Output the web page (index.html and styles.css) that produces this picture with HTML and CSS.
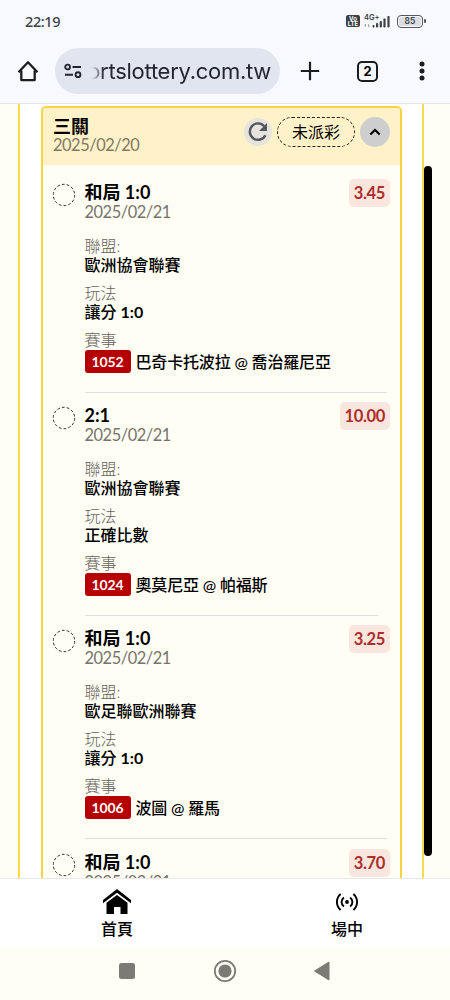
FILE: index.html
```html
<!DOCTYPE html>
<html lang="zh-Hant">
<head>
<meta charset="utf-8">
<meta name="viewport" content="width=device-width">
<title>三關</title>
<link rel="stylesheet" href="styles.css">
</head>
<body>
<header class="status">
  <span class="clock">22:19</span>
  <span class="volte"><span>Vo</span><span>LTE</span></span>
  <span class="signal"><span class="net">4G+</span>
    <svg width="27" height="15" viewBox="0 0 27 15"><g fill="#3e4147"><rect x="8.5" y="11" width="2" height="2.5" rx=".8"/><rect x="12" y="9" width="2.2" height="4.5" rx=".8"/><rect x="15.7" y="7" width="2.2" height="6.5" rx=".8"/><rect x="19.4" y="4.5" width="2.2" height="9" rx=".8"/><rect x="23.4" y="2" width="2.2" height="11.5" rx=".8"/></g><path d="M1.5 13V10L.5 11.500M4.500 10v3l1-1.500" fill="none" stroke="#9a9ca1" stroke-width=".8"/></svg>
  </span>
  <span class="battery"><span class="charge">85</span></span>
</header>
<div class="toolbar">
  <svg class="home" width="22" height="22" viewBox="0 0 22 22"><path d="M1.500 12.300 11 2.300l9.500 10M4.300 10.500v9.600h13.400v-9.600" fill="none" stroke="#1c1d22" stroke-width="2.300" stroke-linejoin="round"/></svg>
  <div class="address">
    <svg width="18" height="16" viewBox="0 0 18 16" fill="none" stroke="#23262e" stroke-width="1.900"><circle cx="3.600" cy="4" r="2.400"/><path d="M8.500 4H17M1 11.700h8"/><circle cx="14" cy="11.700" r="2.400"/></svg>
    <div class="url"><span>ortslottery.com.tw</span></div>
  </div>
  <svg class="plus" width="20" height="20" viewBox="0 0 20 20"><path d="M10 .8v18.400M.8 10h18.400" stroke="#1c1d22" stroke-width="2.200"/></svg>
  <span class="tabs">2</span>
  <svg class="more" width="6" height="20" viewBox="0 0 6 20" fill="#1c1d22"><circle cx="3" cy="3" r="2.500"/><circle cx="3" cy="10" r="2.500"/><circle cx="3" cy="17" r="2.500"/></svg>
</div>
<main class="page">
  <div class="panel">
    <section class="card">
      <div class="card-head">
        <div class="card-title"><h1>三關</h1><p class="date">2025/02/20</p></div>
        <span class="refresh"><svg width="28" height="28" viewBox="0 0 28 28"><path d="M20.300 8.300A8.200 8.200 0 1 0 21.400 17.200" fill="none" stroke="#53575d" stroke-width="2.400"/><path d="M23 5v8h-8z" fill="#53575d"/></svg></span>
        <span class="state">未派彩</span>
        <span class="toggle"><svg width="12" height="8" viewBox="0 0 12 8"><path d="M1.300 6.500 6 1.900l4.700 4.600" fill="none" stroke="#000" stroke-width="2.100"/></svg></span>
      </div>
      <article class="bet">
        <svg class="ring" width="24" height="24" viewBox="0 0 24 24"><circle cx="12" cy="12" r="10.700"/></svg>
        <div class="info"><h2>和局 1:0</h2><p class="date">2025/02/21</p>
          <dl><dt>聯盟:</dt><dd>歐洲協會聯賽</dd><dt>玩法</dt><dd>讓分 <b>1:0</b></dd><dt>賽事</dt><dd class="match"><b class="code">1052</b>巴奇卡托波拉 @ 喬治羅尼亞</dd></dl></div>
        <span class="odds">3.45</span>
      </article>
      <article class="bet">
        <svg class="ring" width="24" height="24" viewBox="0 0 24 24"><circle cx="12" cy="12" r="10.700"/></svg>
        <div class="info"><h2>2:1</h2><p class="date">2025/02/21</p>
          <dl><dt>聯盟:</dt><dd>歐洲協會聯賽</dd><dt>玩法</dt><dd>正確比數</dd><dt>賽事</dt><dd class="match"><b class="code">1024</b>奧莫尼亞 @ 帕福斯</dd></dl></div>
        <span class="odds">10.00</span>
      </article>
      <article class="bet">
        <svg class="ring" width="24" height="24" viewBox="0 0 24 24"><circle cx="12" cy="12" r="10.700"/></svg>
        <div class="info"><h2>和局 1:0</h2><p class="date">2025/02/21</p>
          <dl><dt>聯盟:</dt><dd>歐足聯歐洲聯賽</dd><dt>玩法</dt><dd>讓分 <b>1:0</b></dd><dt>賽事</dt><dd class="match"><b class="code">1006</b>波圖 @ 羅馬</dd></dl></div>
        <span class="odds">3.25</span>
      </article>
      <article class="bet">
        <svg class="ring" width="24" height="24" viewBox="0 0 24 24"><circle cx="12" cy="12" r="10.700"/></svg>
        <div class="info"><h2>和局 1:0</h2><p class="date">2025/02/21</p></div>
        <span class="odds">3.70</span>
      </article>
    </section>
  </div>
  <div class="scrollbar"></div>
</main>
<nav class="nav">
  <a class="nav-item"><svg width="30" height="27" viewBox="0 0 30 27"><path d="M1 14.200V11L15 0l14 11v3.200L15 3.800z"/><path d="M4.500 13.800 15 6l10.500 7.800V25H18.500v-7h-6.500v7H4.500z"/></svg><span>首頁</span></a>
  <a class="nav-item"><svg width="22" height="18" viewBox="0 0 22 18" fill="none" stroke="#000" stroke-width="1.900"><path d="M4.600 1C-.3 5.500-.3 12.500 4.600 17M17.400 1c4.900 4.500 4.900 11.500 0 16M7.900 4.400C4.800 6.800 4.800 11.200 7.900 13.600M14.100 4.400c3.100 2.400 3.100 6.800 0 9.200"/><circle cx="11" cy="9" r="1.900" fill="#000" stroke="none"/></svg><span>場中</span></a>
</nav>
<footer class="system">
  <svg width="18" height="18" viewBox="0 0 18 18"><rect x="1" y="1" width="16" height="16" rx="2.500" fill="#7b7a75"/></svg>
  <svg width="24" height="24" viewBox="0 0 24 24"><circle cx="12" cy="12" r="10.200" fill="none" stroke="#7b7a75" stroke-width="1.800"/><circle cx="12" cy="12" r="6.600" fill="#7b7a75"/></svg>
  <svg width="18" height="22" viewBox="0 0 18 22"><path d="M16 2v18L1.500 11z" fill="#7b7a75" stroke="#7b7a75" stroke-linejoin="round"/></svg>
</footer>
</body>
</html>
```

FILE: styles.css
```css
* { box-sizing: border-box; }
body, h1, h2, p, dl, dd { margin: 0; }
body { width: 450px; height: 1000px; display: flex; flex-direction: column; overflow: hidden; background: #f8f9fe; color: #000; font: 16px/19px Lato, "Noto Sans CJK TC", sans-serif; }
svg { display: block; flex: none; }

.status { height: 42px; display: flex; align-items: center; padding: 0 25px; color: #3e4147; }
.clock { flex: 1; font: 500 14.500px/20px "Noto Sans", sans-serif; letter-spacing: -.4px; }
.volte { width: 14px; height: 12px; margin-right: 4px; border-radius: 2px; background: #3e4147; color: #fff; display: flex; flex-direction: column; align-items: center; justify-content: center; font: 700 6px/5.500px Inter, sans-serif; }
.signal { width: 27px; margin-right: 6px; display: grid; }
.signal > * { grid-area: 1 / 1; }
.net { font: 600 7.500px/8px Inter, sans-serif; }
.battery { position: relative; width: 26px; height: 13px; margin-right: 2px; padding: 1px; border: 1.500px solid #55585e; border-radius: 4px; }
.battery::after { content: ""; position: absolute; right: -3.500px; top: 3px; width: 1.500px; height: 4px; background: #55585e; border-radius: 1px; }
.charge { display: block; height: 100%; border-radius: 2px; background: #dcdde1; text-align: center; font: 600 8.500px/9px Inter, sans-serif; }

.toolbar { height: 62px; flex: none; display: flex; align-items: center; padding: 0 25px 3px 17px; border-bottom: 1px solid #e3e5ed; }
.address { width: 225px; height: 46px; margin: 0 20px 0 16px; padding: 0 9px; border-radius: 23px; background: #e0e5f0; display: flex; align-items: center; gap: 10px; }
.url { flex: 1; min-width: 0; overflow: hidden; display: flex; justify-content: flex-end; white-space: nowrap; font: 22px/32px Inter, sans-serif; letter-spacing: -.27px; color: #23262e; mask-image: linear-gradient(90deg, transparent, #000 12px); }
.tabs { width: 21px; height: 21px; margin: 0 52px 0 37px; border: 2px solid #1c1d22; border-radius: 5px; text-align: center; font: 700 13px/17px Inter, sans-serif; flex: none; }
.toolbar .more { margin-left: -11px; }

.page { position: relative; height: 774px; flex: none; overflow: hidden; padding: 0 26px 0 18px; background: #fffef5; }
.panel { height: 774px; padding: 2px 20px 0 21px; border: solid #f8dc4c; border-width: 0 2px; background: #fff; }
.card { height: 900px; border: 2px solid #f8d440; border-radius: 5px 5px 0 0; background: #fffef5; overflow: hidden; }
.card-head { height: 57px; padding: 9px 10px 0 10px; display: flex; align-items: flex-start; background: #fff1c8; }
.card-title { flex: 1; }
h1, h2 { font-size: 18px; font-weight: 700; line-height: 19px; }
.date { color: #77736c; font-size: 16.400px; letter-spacing: -.45px; }
.card-title .date { color: #817963; margin-top: -1px; }
.refresh { width: 28px; height: 28px; margin: 1px 5px 0 0; border-radius: 50%; background: #e5e3dc; }
.state { width: 78px; height: 30px; margin: 0 5px 0 0; border: 1px dashed #222; border-radius: 15px; text-align: center; line-height: 27px; }
.toggle { width: 30px; height: 30px; border-radius: 50%; background: #cecece; display: grid; place-items: center; }
.bet { height: 223.200px; padding: 18px 10px 0; display: flex; align-items: flex-start; }
.ring { margin: 0 8.500px 0 -1px; fill: none; stroke: #333; stroke-width: 1; stroke-dasharray: 2.800 2; }
.info { flex: 1; height: 210px; border-bottom: 1px solid #dfddd8; margin-right: -38px; }
.odds { position: relative; height: 28px; padding: 0 5px; margin: -4px 0 0; border-radius: 5px; background: #f8e6df; color: #ad2d28; font-size: 16.500px; font-weight: 700; letter-spacing: -.35px; line-height: 28px; }
dl { margin-top: 15px; }
dt { color: #66625c; font-weight: 300; }
dd { font-weight: 500; margin-bottom: 9px; }
.match { display: flex; align-items: center; gap: 5px; margin-top: 1px; line-height: 23px; letter-spacing: -.16px; }
.code { width: 46px; height: 23px; border-radius: 3px; background: #b70000; color: #fff; font-size: 14px; text-align: center; line-height: 23px; }
.scrollbar { position: absolute; left: 424px; top: 62px; width: 8px; height: 690px; border-radius: 4px; background: #000; }

.nav { height: 68px; flex: none; display: grid; grid-template-columns: 234px 226px; background: #fff; border-top: 1px solid #e9e8e5; }
.nav-item { display: grid; grid-template-rows: 40px 20px; align-content: start; justify-items: center; align-items: center; padding-top: 3px; font-weight: 500; }
.nav-item span { margin-top: -8px; }
.system { flex: 1; display: flex; justify-content: space-between; align-items: center; padding: 0 119px 4px 118px; background: #fffef5; }
```
